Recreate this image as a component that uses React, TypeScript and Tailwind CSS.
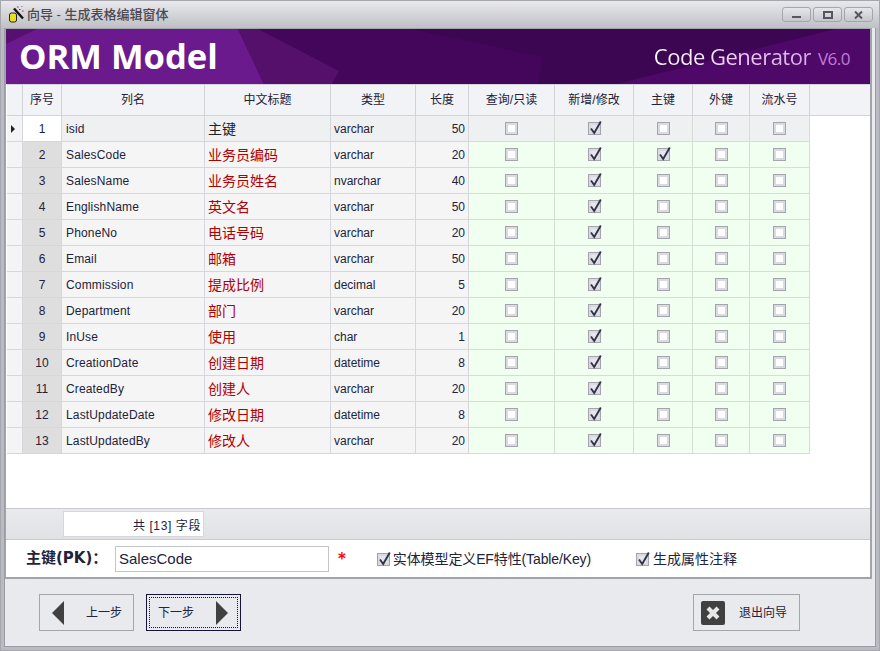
const FONT = "font-['Liberation_Sans','Noto_Sans_CJK_SC',sans-serif]";

const COLUMNS = [
  { title: "序号", width: "w-[39px]" },
  { title: "列名", width: "w-[143px]" },
  { title: "中文标题", width: "w-[126px]" },
  { title: "类型", width: "w-[85px]" },
  { title: "长度", width: "w-[53px]" },
  { title: "查询/只读", width: "w-[86px]" },
  { title: "新增/修改", width: "w-[79px]" },
  { title: "主键", width: "w-[59px]" },
  { title: "外键", width: "w-[57px]" },
  { title: "流水号", width: "w-[60px]" },
];

const ROWS = [
  ["isid", "主键", "varchar", 50],
  ["SalesCode", "业务员编码", "varchar", 20],
  ["SalesName", "业务员姓名", "nvarchar", 40],
  ["EnglishName", "英文名", "varchar", 50],
  ["PhoneNo", "电话号码", "varchar", 20],
  ["Email", "邮箱", "varchar", 50],
  ["Commission", "提成比例", "decimal", 5],
  ["Department", "部门", "varchar", 20],
  ["InUse", "使用", "char", 1],
  ["CreationDate", "创建日期", "datetime", 8],
  ["CreatedBy", "创建人", "varchar", 20],
  ["LastUpdateDate", "修改日期", "datetime", 8],
  ["LastUpdatedBy", "修改人", "varchar", 20],
] as const;

function CheckBox({ checked }: { checked?: boolean }) {
  return (
    <span className="relative block h-[13px] w-[13px] border border-[#a3a5ab] bg-[#d9dae2] p-[2px]">
      <span className={`block h-full w-full ${checked ? "bg-[#e6e7ec]" : "bg-white"}`} />
      {checked && (
        <svg
          width="17"
          height="17"
          viewBox="0 0 17 17"
          className="absolute -top-[3px] -left-[1px] overflow-visible"
        >
          <path d="M3 8.5 L6.2 13 L12.8 1.5" fill="none" stroke="#33334a" strokeWidth="1.9" />
        </svg>
      )}
    </span>
  );
}

function WindowButton({ children }: { children: React.ReactNode }) {
  return (
    <div className="flex h-[15px] w-[29px] items-center justify-center rounded-[3px] border border-[#a4a6ae] bg-gradient-to-b from-[#e6e7ea] to-[#c6c7cd]">
      {children}
    </div>
  );
}

function Banner() {
  return (
    <div className="relative flex h-[55px] items-center justify-between bg-[#43065a] pl-[13px] pr-[20px]">
      <svg
        className="absolute inset-0 h-full w-full"
        viewBox="0 0 864 55"
        preserveAspectRatio="none"
      >
        <rect width="864" height="55" fill="#43065a" />
        <polygon points="0,0 232,0 258,55 0,55" fill="#6a1a8c" />
        <polygon points="0,0 31,0 0,15" fill="#571070" />
        <polygon points="232,0 252,0 333,42 326,55 258,55" fill="#55106c" />
        <polygon points="407,0 829,0 611,55 532,55 537,28" fill="#3d0652" />
        <polygon points="829,0 864,0 864,55 611,55" fill="#4e0867" />
      </svg>
      <span className="relative text-[34.6px] font-bold leading-none text-white font-['Open_Sans',sans-serif]">
        ORM Model
      </span>
      <span className="relative -mt-[1px] flex items-baseline font-['Open_Sans',sans-serif] text-[22px] leading-none text-white">
        <span className="bg-gradient-to-r from-white to-[#d9a9e6] bg-clip-text tracking-[-0.5px] text-transparent">
          Code Generator
        </span>
        <span className="ml-[7px] text-[17px] tracking-[-0.5px] text-[#c27ad9]">
          V6.0
        </span>
      </span>
    </div>
  );
}

function Grid() {
  return (
    <div className="flex flex-1 flex-col pl-px">
      <div className="flex h-[32px] border-y border-[#d2d3d8] bg-[#f2f3f6]">
        <div className="w-[16px] border-r border-[#d2d3d8]" />
        {COLUMNS.map((col) => (
          <div
            key={col.title}
            className={`${col.width} flex items-center justify-center border-r border-[#d2d3d8] text-xs text-[#222236]`}
          >
            {col.title}
          </div>
        ))}
      </div>
      {ROWS.map(([name, label, type, length], i) => {
        const first = i === 0;
        return (
          <div key={name} className="flex h-[26px] text-xs text-[#22223a]">
            <div className="flex w-[16px] items-center justify-center border-r border-b border-[#d6d7dc] bg-[#f4f4f6]">
              {first && (
                <span className="ml-[-3px] h-0 w-0 border-y-[4px] border-l-[4px] border-y-transparent border-l-[#222]" />
              )}
            </div>
            <div
              className={`flex w-[39px] items-center justify-center border-r border-b border-[#d6d7dc] ${first ? "bg-white" : "bg-[#dedede]"}`}
            >
              {i + 1}
            </div>
            <div
              className={`flex w-[143px] items-center border-r border-b border-[#d6d7dc] pl-1 tracking-[0.15px] ${first ? "bg-[#eff0f2]" : "bg-[#f5f5f5]"}`}
            >
              {name}
            </div>
            <div
              className={`flex w-[126px] items-center border-r border-b border-[#d6d7dc] pl-[3px] text-sm ${first ? "bg-[#eff0f2] text-[#222]" : "bg-[#f5f5f5] text-[#b00000]"}`}
            >
              {label}
            </div>
            <div
              className={`flex w-[85px] items-center border-r border-b border-[#d6d7dc] pl-[3px] ${first ? "bg-[#eff0f2]" : "bg-[#f5f5f5]"}`}
            >
              {type}
            </div>
            <div
              className={`flex w-[53px] items-center justify-end border-r border-b border-[#d6d7dc] pr-[3px] ${first ? "bg-[#eff0f2]" : "bg-[#f5f5f5]"}`}
            >
              {length}
            </div>
            {[86, 79, 59, 57, 60].map((w, c) => (
              <div
                key={c}
                className={`flex items-center justify-center border-r border-b border-[#d3dfd3] ${first ? "bg-[#eff0f2]" : "bg-[#f0fff0]"}`}
                style={{ width: w }}
              >
                <CheckBox checked={c === 1 || (c === 2 && i === 1)} />
              </div>
            ))}
          </div>
        );
      })}
    </div>
  );
}

function NavButton({
  children,
  focused,
  width,
}: {
  children: React.ReactNode;
  focused?: boolean;
  width: string;
}) {
  return (
    <button
      className={`${width} flex h-[37px] items-center border text-xs text-[#22223a] ${focused ? "border-[#14143a] p-[2px]" : "border-[#a4a6ab]"}`}
    >
      {children}
    </button>
  );
}

export default function App() {
  return (
    <div
      className={`${FONT} flex h-[651px] w-[880px] flex-col overflow-hidden border border-[#a5a6ae] bg-[#b9bac2]`}
    >
      <div className="flex h-[27px] shrink-0 items-center bg-gradient-to-b from-[#e9e9ec] to-[#bfc0c6] pl-[7px] pr-[6px]">
        <svg width="18" height="18" viewBox="0 0 18 18">
          <rect x="1.5" y="7" width="7" height="9" rx="2" fill="#e8e020" stroke="#222" />
          <path d="M6 2.5 L15 12.5" stroke="#111" strokeWidth="2.4" />
          <path d="M9 1h1.5M13 0h1.5M11 3.5h1.5M14 5h1.5" stroke="#8a3040" />
        </svg>
        <span className="ml-[1px] text-[13px] font-medium text-[#4a4a55]">
          向导 - 生成表格编辑窗体
        </span>
        <div className="ml-auto flex gap-[2px]">
          <WindowButton>
            <span className="mt-[4px] h-[2px] w-[9px] bg-[#55565e]" />
          </WindowButton>
          <WindowButton>
            <span className="h-[8px] w-[10px] border-2 border-[#55565e]" />
          </WindowButton>
          <WindowButton>
            <svg width="9" height="8" viewBox="0 0 9 8">
              <path d="M1 0.5 L8 7.5 M8 0.5 L1 7.5" stroke="#55565e" strokeWidth="2" />
            </svg>
          </WindowButton>
        </div>
      </div>

      <div className="mx-[3px] mb-[3px] flex flex-1 flex-col border-x border-b border-[#9b9ca4] bg-[#e9eaee]">
        <div className="mr-[3px] flex h-[551px] flex-col border border-r-2 border-b-2 border-[#a2a3ab] bg-white">
          <Banner />
          <Grid />
          <div className="flex h-[32px] items-center border-y border-[#c9cad0] bg-gradient-to-b from-[#e9eaee] to-[#e1e2e6] pl-[57px]">
            <div className="flex h-[26px] w-[141px] items-center justify-end border border-[#d6d7dc] bg-white pr-[2px] pt-[3px] text-xs tracking-[0.6px] text-[#22223a]">
              共 [13] 字段
            </div>
          </div>
          <div className="flex h-[37px] items-center text-sm text-[#22223a]">
            <span className="ml-[20px] w-[89px] text-[15px] font-bold font-['DejaVu_Sans','Noto_Sans_CJK_SC',sans-serif]">
              主键(PK)：
            </span>
            <div className="flex h-[26px] w-[214px] items-center border border-[#c4c5cb] pl-[3px] text-[15px]">
              SalesCode
            </div>
            <span className="ml-[9px] mt-[2px] font-['DejaVu_Sans',sans-serif] text-[15px] font-bold text-[#ff0000]">
              *
            </span>
            <span className="ml-[31px] mr-[3px] mt-px">
              <CheckBox checked />
            </span>
            <span className="mt-px tracking-[-0.12px]">实体模型定义EF特性(Table/Key)</span>
            <span className="ml-[45px] mr-[4px] mt-px">
              <CheckBox checked />
            </span>
            <span className="mt-px">生成属性注释</span>
          </div>
        </div>

        <div className="flex flex-1 items-start pl-[34px] pr-[75px] pt-[15px]">
          <NavButton width="w-[95px]">
            <svg width="12" height="24" viewBox="0 0 12 24" className="ml-[12px]">
              <polygon points="12,0 12,24 0,12" fill="#404040" />
            </svg>
            <span className="ml-[22px]">上一步</span>
          </NavButton>
          <div className="ml-[12px]">
            <NavButton width="w-[95px]" focused>
              <span className="flex h-full w-full items-center border border-dotted border-[#14143a]">
                <span className="ml-[8px]">下一步</span>
                <svg width="12" height="24" viewBox="0 0 12 24" className="ml-[22px]">
                  <polygon points="0,0 0,24 12,12" fill="#404040" />
                </svg>
              </span>
            </NavButton>
          </div>
          <div className="ml-auto">
            <NavButton width="w-[107px]">
              <span className="ml-[7px] flex h-6 w-6 items-center justify-center rounded-[2px] bg-[#404040]">
                <svg width="16" height="16" viewBox="0 0 16 16">
                  <path d="M3 3 L13 13 M13 3 L3 13" stroke="#e8e8e8" strokeWidth="4.2" />
                </svg>
              </span>
              <span className="ml-[14px]">退出向导</span>
            </NavButton>
          </div>
        </div>
      </div>
    </div>
  );
}
